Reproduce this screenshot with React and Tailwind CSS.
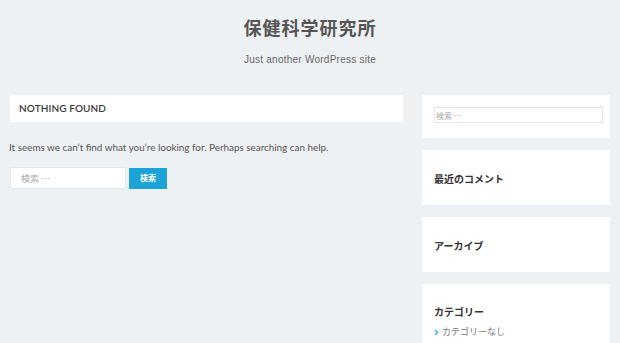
export default function App() {
  const widgets = [
    { title: "最近のコメント" },
    { title: "アーカイブ" },
  ];

  return (
    <div className="min-h-[343px] bg-[#eef1f4] overflow-hidden" style={{ fontFamily: 'Lato, "Noto Sans CJK JP", sans-serif' }}>
      <header className="flex flex-col items-center pt-[14px] h-[95px]">
        <h1
          className="text-[18px] leading-[26px] font-bold text-[#555] tracking-[1px]"
          style={{ fontFamily: '"Noto Sans CJK JP", sans-serif' }}
        >
          保健科学研究所
        </h1>
        <p
          className="mt-[14px] text-[10px] leading-[12px] text-[#666] tracking-[0.25px]"
          style={{ fontFamily: '"Liberation Sans", sans-serif' }}
        >
          Just another WordPress site
        </p>
      </header>

      <div className="flex gap-[19px] pl-[10px] pr-[10px]">
        <main className="w-[393px] shrink-0">
          <div className="bg-white h-[27px] flex items-center px-[9px]">
            <h2 className="text-[10px] font-semibold text-[#3a3a3a] tracking-[0.1px]">NOTHING FOUND</h2>
          </div>
          <p className="mt-[18px] -ml-[1px] text-[9.9px] leading-[14px] text-[#555]">
            It seems we can’t find what you’re looking for. Perhaps searching can help.
          </p>
          <form className="mt-[13px] flex items-center gap-[3px]" onSubmit={(e) => e.preventDefault()}>
            <input
              type="search"
              placeholder="検索 …"
              className="block w-[116px] h-[22px] bg-white border border-[#e6e8eb] px-[10px] text-[9px] placeholder:text-[#aaa] outline-none"
              style={{ fontFamily: '"Noto Sans CJK JP", sans-serif' }}
            />
            <button
              type="submit"
              className="w-[38px] h-[21px] bg-[#1ba3d8] text-white text-[8px] font-bold"
              style={{ fontFamily: '"Noto Sans CJK JP", sans-serif' }}
            >
              検索
            </button>
          </form>
        </main>

        <aside className="w-[188px] shrink-0 flex flex-col gap-[12px]" style={{ fontFamily: '"Noto Sans CJK JP", sans-serif' }}>
          <div className="bg-white h-[43px] px-[12px] pt-[12px]">
            <input
              type="search"
              placeholder="検索 …"
              className="block w-[169px] h-[16px] border border-[#e3e5e8] px-[1px] text-[8px] placeholder:text-[#aaa] outline-none"
            />
          </div>
          {widgets.map((w) => (
            <div key={w.title} className="bg-white h-[55px] px-[12px] flex items-center">
              <h3 className="text-[10px] font-bold text-[#333] pt-[2px]">{w.title}</h3>
            </div>
          ))}
          <div className="bg-white h-[70px] px-[12px] pt-[21px]">
            <h3 className="text-[10px] font-bold text-[#333] leading-[14px]">カテゴリー</h3>
            <ul className="mt-[7px]">
              <li className="flex items-center gap-[3px] text-[9px] text-[#777] leading-[12px]">
                <svg width="5" height="7" viewBox="0 0 5 7" className="shrink-0">
                  <path d="M1 1l2.5 2.5L1 6" fill="none" stroke="#3ab4e6" strokeWidth="1.4" />
                </svg>
                カテゴリーなし
              </li>
            </ul>
          </div>
        </aside>
      </div>
    </div>
  );
}
